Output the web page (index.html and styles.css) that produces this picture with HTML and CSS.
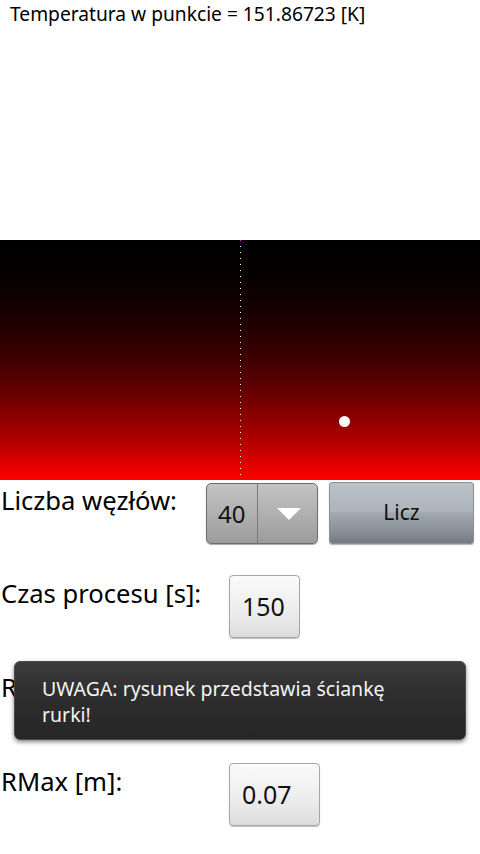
FILE: index.html
```html
<!DOCTYPE html>
<html>
<head>
<meta charset="utf-8">
<link rel="stylesheet" href="styles.css">
</head>
<body>
<div class="screen">
  <div class="temp">Temperatura w punkcie = 151.86723 [K]</div>
  <div class="canvas">
    <div class="axis"></div>
    <div class="axis-top"></div>
    <div class="point"></div>
  </div>
  <div class="row row1">
    <div class="label label1">Liczba węzłów:</div>
    <div class="spinner">
      <span class="spin-val">40</span>
      <span class="spin-btn"><svg width="24" height="13" viewBox="0 0 24 13"><polygon points="0,0 24,0 12,12" fill="#fff"/></svg></span>
    </div>
    <div class="btn">Licz</div>
  </div>
  <div class="row">
    <div class="label">Czas procesu [s]:</div>
    <div class="field f150">150</div>
  </div>
  <div class="row">
    <div class="label">RMin [m]:</div>
    <div class="field f007"></div>
  </div>
  <div class="row">
    <div class="label">RMax [m]:</div>
    <div class="field f007">0.07</div>
  </div>
  <div class="toast">UWAGA: rysunek przedstawia ściankę rurki!</div>
</div>
</body>
</html>
```

FILE: styles.css
```css
html, body {
  margin: 0;
  padding: 0;
  background: #fff;
}
.screen {
  position: relative;
  width: 480px;
  height: 854px;
  overflow: hidden;
  font-family: "Noto Sans", "Open Sans", sans-serif;
  color: #000;
}
.temp {
  height: 240px;
  box-sizing: border-box;
  padding: 0 0 0 10px;
  font-size: 19.2px;
  line-height: 27px;
}
.canvas {
  position: relative;
  height: 240px;
  background: linear-gradient(to bottom,
    #000000 0%, #040000 12.5%, #100000 25%, #240000 37.5%, #400000 50%,
    #640000 62.5%, #8f0000 75%, #c30000 87.5%, #ff0000 100%);
}
.axis {
  position: absolute;
  left: 240px;
  top: 0;
  width: 1px;
  height: 240px;
  background: repeating-linear-gradient(to bottom, #fff 0, #fff 1px, transparent 1px, transparent 6px);
}
.axis-top {
  position: absolute;
  left: 240px;
  top: 0;
  width: 1px;
  height: 1px;
  background: #ff00ff;
}
.point {
  position: absolute;
  left: 339px;
  top: 176px;
  width: 11px;
  height: 11px;
  border-radius: 50%;
  background: #fff;
}
.row {
  display: flex;
  align-items: flex-start;
  height: 63px;
  margin-top: 31px;
}
.row1 {
  margin-top: 0;
  height: 64px;
  padding-top: 2px;
  box-sizing: border-box;
}
.label {
  width: 229px;
  flex: none;
  font-size: 25.6px;
  line-height: 36px;
  padding: 1px 0 0 1px;
  box-sizing: border-box;
}
.label1 {
  width: 206px;
}
.spinner {
  margin-top: 1px;
  width: 112px;
  height: 61px;
  box-sizing: border-box;
  display: flex;
  border: 1px solid #6e6e6e;
  border-radius: 5px;
  background: linear-gradient(to bottom, #c4c4c4 0%, #b0b0b0 50%, #9c9c9c 100%);
  box-shadow: 0 1px 1px rgba(0,0,0,0.35);
}
.spin-val {
  width: 51px;
  border-right: 1px solid #7a7a7a;
  box-sizing: border-box;
  font-size: 24px;
  line-height: 59px;
  padding-left: 11px;
  color: #111;
}
.spin-btn {
  flex: 1;
  display: flex;
  align-items: center;
  justify-content: center;
  padding-left: 2px;
  padding-top: 2px;
}
.btn {
  margin-left: 11px;
  width: 145px;
  height: 62px;
  box-sizing: border-box;
  border-radius: 3px;
  border: 1px solid #8c9096;
  background: linear-gradient(to bottom, #bcc2ca 0%, #aeb4bc 48%, #a2a8b0 50%, #8a9098 80%, #747b84 100%);
  box-shadow: 0 1px 1px rgba(0,0,0,0.3);
  display: flex;
  align-items: center;
  justify-content: center;
  font-size: 21px;
  color: #111;
  padding-bottom: 2px;
}
.field {
  height: 63px;
  box-sizing: border-box;
  border: 1px solid #a6a6a6;
  border-radius: 4px;
  background: linear-gradient(to bottom, #fafafa 0%, #ececec 60%, #dcdcdc 100%);
  box-shadow: 0 1px 1px rgba(0,0,0,0.25);
  font-size: 25px;
  line-height: 60px;
  padding-left: 12px;
  color: #111;
}
.f150 { width: 71px; }
.f007 { width: 91px; }
.toast {
  position: absolute;
  left: 14px;
  top: 661px;
  width: 452px;
  height: 79px;
  box-sizing: border-box;
  border-radius: 6px;
  border: 1px solid #4a4a4a;
  background: linear-gradient(to bottom, #3c3c3c 0%, #2e2e2e 40%, #262626 100%);
  box-shadow: 0 2px 4px rgba(0,0,0,0.5);
  color: #f4f4f4;
  font-size: 19.5px;
  line-height: 26px;
  padding: 14px 40px 0 27px;
}
```
